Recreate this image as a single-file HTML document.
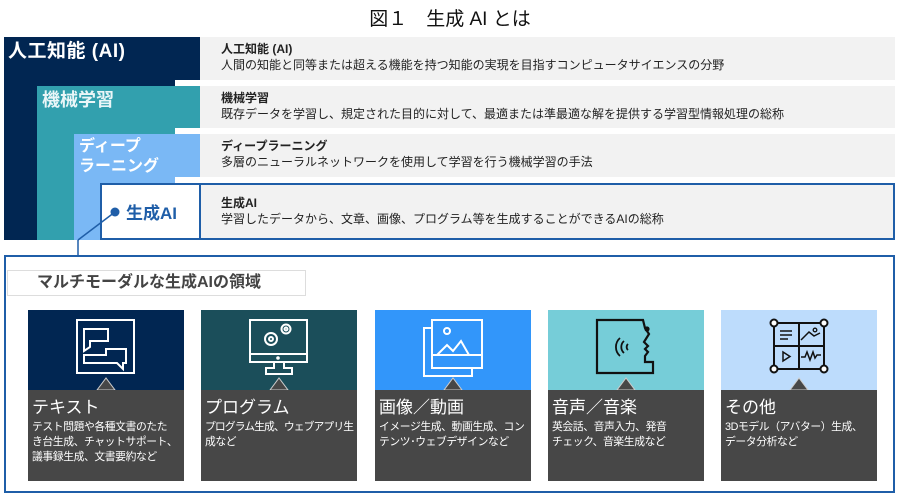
<!DOCTYPE html>
<html><head><meta charset="utf-8"><style>
*{margin:0;padding:0;box-sizing:border-box}
body{width:900px;height:495px;background:#fff;position:relative;overflow:hidden;font-family:"Liberation Sans","Noto Sans CJK JP",sans-serif}
.a{position:absolute}
.row{position:absolute;left:200px;width:695px;background:#f2f2f2;padding-left:21px;font-size:12px;color:#222;line-height:16px}
.row b{display:block;padding-top:4px}
.lbl{position:absolute;color:#fff;font-weight:bold;font-size:18px;line-height:22px}
.card{position:absolute;top:310px;width:156px;height:171px}
.top{position:absolute;left:0;top:0;width:156px;height:80px}
.bot{position:absolute;left:0;top:80px;width:156px;height:91px;background:#474747;color:#fff;padding:8px 0 0 4px;overflow:hidden}
.bot h3{font-weight:normal;font-size:17px;line-height:20px}
.bot p{font-size:10.8px;line-height:15px;margin-top:2px;letter-spacing:-0.4px;white-space:nowrap}
</style></head><body>
<div class="a" style="left:0;top:4px;width:900px;text-align:center;font-size:19px;color:#111">図１　生成 AI とは</div>

<div class="a" style="left:4px;top:37px;width:196px;height:203px;background:#012652"></div>
<div class="a" style="left:37px;top:86px;width:163px;height:154px;background:#32a0ae"></div>
<div class="a" style="left:74px;top:134px;width:126px;height:106px;background:#7ab8f5"></div>
<div class="a" style="left:175px;top:80px;width:25px;height:6px;background:#fff"></div>
<div class="a" style="left:175px;top:128px;width:25px;height:6px;background:#fff"></div>
<div class="a" style="left:175px;top:177px;width:25px;height:6px;background:#fff"></div>

<div class="lbl" style="left:8px;top:41px;font-size:19px;letter-spacing:0.5px">人工知能 (AI)</div>
<div class="lbl" style="left:42px;top:89px;color:#eaf6f8">機械学習</div>
<div class="lbl" style="left:79px;top:137px;font-size:16px;line-height:20px">ディープ<br>ラーニング</div>

<div class="row" style="top:37px;height:43px"><b>人工知能 (AI)</b>人間の知能と同等または超える機能を持つ知能の実現を目指すコンピュータサイエンスの分野</div>
<div class="row" style="top:86px;height:42px"><b>機械学習</b>既存データを学習し、規定された目的に対して、最適または準最適な解を提供する学習型情報処理の総称</div>
<div class="row" style="top:134px;height:43px"><b>ディープラーニング</b>多層のニューラルネットワークを使用して学習を行う機械学習の手法</div>
<div class="a" style="left:100px;top:183px;width:795px;height:57px;border:2px solid #1f5ea8;background:#f2f2f2"></div>
<div class="a" style="left:102px;top:185px;width:99px;height:53px;background:#fff;border-right:2px solid #1f5ea8"></div>
<div class="row" style="top:185px;height:53px;left:202px;width:691px;padding-left:19px;padding-top:6px"><b>生成AI</b>学習したデータから、文章、画像、プログラム等を生成することができるAIの総称</div>
<div class="a" style="left:126px;top:199px;font-size:17px;font-weight:bold;color:#1f5ea8">生成AI</div>

<div class="a" style="left:4px;top:255px;width:891px;height:238px;border:2px solid #1f5ea8"></div>
<svg class="a" style="left:0;top:0" width="900" height="260"><line x1="115" y1="212" x2="78" y2="240" stroke="#1f5ea8" stroke-width="1.5"/><line x1="78" y1="240" x2="78" y2="256" stroke="#1f5ea8" stroke-width="1.5"/><circle cx="115" cy="212" r="4.5" fill="#1f5ea8"/></svg>

<div class="a" style="left:7px;top:270px;width:299px;height:26px;border:1px solid #ddd;background:#fff;font-weight:bold;font-size:16px;color:#444;padding-left:29px;line-height:24px">マルチモーダルな生成AIの領域</div>

<div class="card" style="left:28px"><div class="top" style="background:#012652">
<svg width="156" height="80" fill="none" stroke="#fff" stroke-width="2"><rect x="49" y="10" width="57" height="53"/><path d="M56 19h24v12H62v6l-6 4z"/><path d="M56 45h22v-6h20v14h-3v6l-6-6H56z"/><polygon points="69,80 78,68 87,80" fill="#474747" stroke="#ccc" stroke-width="1"/></svg></div>
<div class="bot"><h3>テキスト</h3><p>テスト問題や各種文書のたた<br>き台生成、チャットサポート、<br>議事録生成、文書要約など</p></div></div>

<div class="card" style="left:201px"><div class="top" style="background:#1b4e5a">
<svg width="156" height="80" fill="none" stroke="#fff" stroke-width="2"><rect x="49" y="10" width="57" height="42"/><line x1="49" y1="44" x2="106" y2="44"/><circle cx="77" cy="48" r="0.8" fill="#fff"/><path d="M73 52v6h-8v6h26v-6h-8v-6"/><circle cx="70" cy="29" r="6"/><circle cx="70" cy="29" r="2"/><circle cx="85" cy="19" r="4.5"/><circle cx="85" cy="19" r="1.5"/><polygon points="69,80 78,68 87,80" fill="#474747" stroke="#ccc" stroke-width="1"/></svg></div>
<div class="bot"><h3>プログラム</h3><p><span style="letter-spacing:-0.9px">プログラム生成、ウェブアプリ生</span><br>成など</p></div></div>

<div class="card" style="left:375px"><div class="top" style="background:#3296fa">
<svg width="156" height="80" fill="none" stroke="#fff" stroke-width="2"><path d="M57 18h-8v48h48v-8"/><rect x="57" y="10" width="50" height="48"/><line x1="57" y1="45" x2="107" y2="45"/><circle cx="72" cy="21" r="3"/><path d="M62 45l10-10 6 6 8-10 8 14"/><polygon points="69,80 78,68 87,80" fill="#474747" stroke="#ccc" stroke-width="1"/></svg></div>
<div class="bot"><h3>画像／動画</h3><p>イメージ生成、動画生成、コン<br>テンツ･ウェブデザインなど</p></div></div>

<div class="card" style="left:548px"><div class="top" style="background:#76cdd8">
<svg width="156" height="80" fill="none" stroke="#111" stroke-width="2.2"><path d="M95 10H49v53h56V52h-8v-6l3-4-3-3 3-3-4-4 5-8-4-6z"/><circle cx="99" cy="19" r="1.5" fill="#111"/><path d="M80 34a4 4 0 0 0 0 6M76 31a8 8 0 0 0 0 12M72 28a12 12 0 0 0 0 18" stroke-width="1.8"/><polygon points="69,80 78,68 87,80" fill="#474747" stroke="#ccc" stroke-width="1"/></svg></div>
<div class="bot"><h3>音声／音楽</h3><p>英会話、音声入力、発音<br>チェック、音楽生成など</p></div></div>

<div class="card" style="left:721px"><div class="top" style="background:#bddcfc">
<svg width="156" height="80" fill="none" stroke="#111" stroke-width="2"><rect x="53" y="13" width="50" height="46"/><line x1="78" y1="13" x2="78" y2="59"/><line x1="53" y1="36" x2="103" y2="36"/><circle cx="53" cy="13" r="3.5" fill="#fff"/><circle cx="103" cy="13" r="3.5" fill="#fff"/><circle cx="53" cy="59" r="3.5" fill="#fff"/><circle cx="103" cy="59" r="3.5" fill="#fff"/><path d="M59 21h12M59 25h12M59 29h8" stroke-width="1.5"/><path d="M80 30l8-8 5 4 6-3" stroke-width="1.5"/><circle cx="94" cy="20" r="1.8" stroke-width="1.3"/><path d="M62 42v9l7-4.5z" stroke-width="1.5"/><path d="M80 47h4l2-5 3 8 3-8 2 6 2-3h4" stroke-width="1.5"/><polygon points="69,80 78,68 87,80" fill="#474747" stroke="#ccc" stroke-width="1"/></svg></div>
<div class="bot"><h3>その他</h3><p>3Dモデル（アバター）生成、<br>データ分析など</p></div></div>
</body></html>
